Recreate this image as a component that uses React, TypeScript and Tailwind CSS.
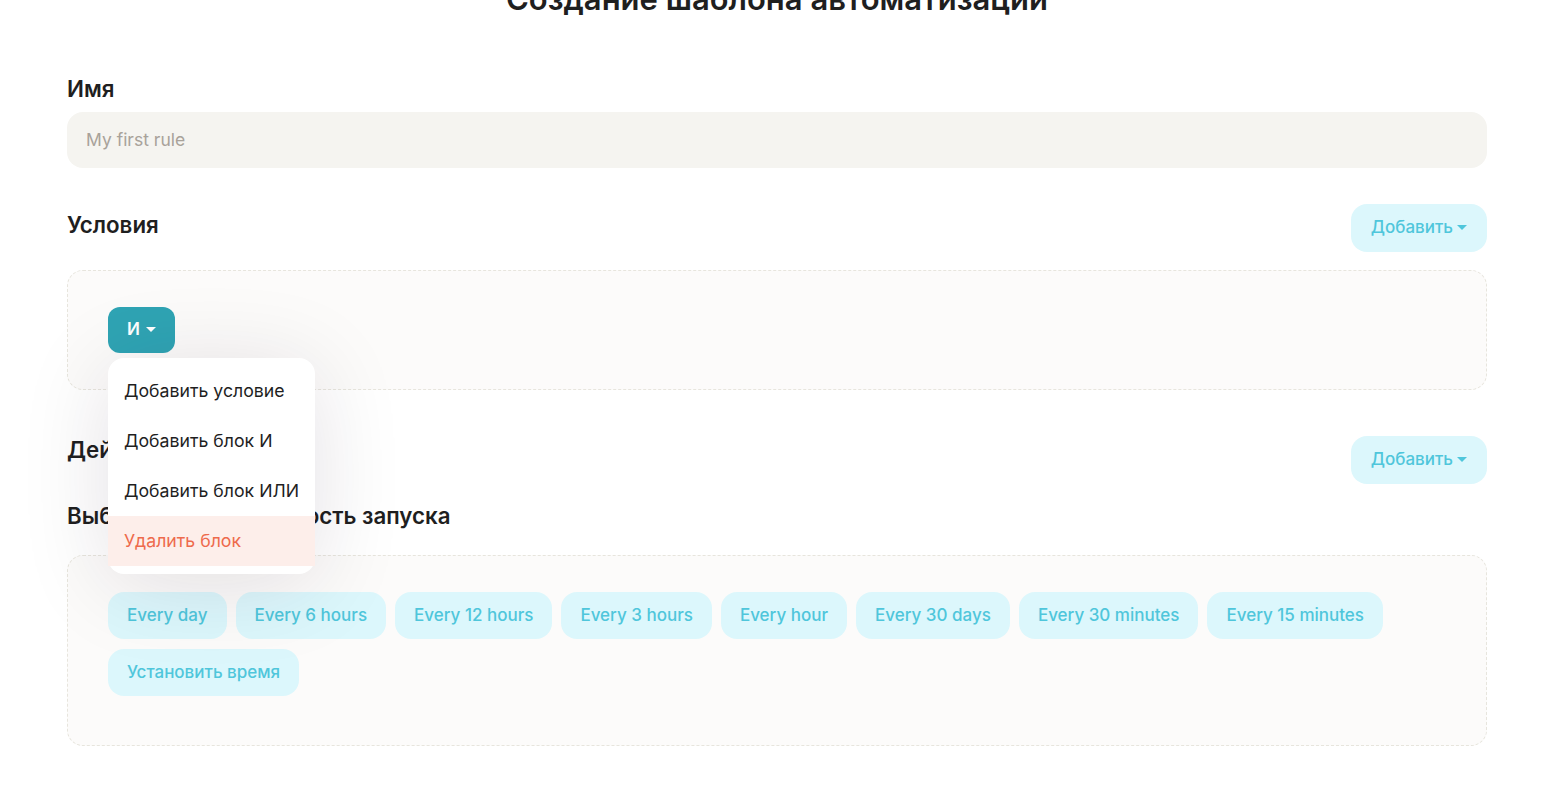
import React from "react";

const periods = [
  "Every day",
  "Every 6 hours",
  "Every 12 hours",
  "Every 3 hours",
  "Every hour",
  "Every 30 days",
  "Every 30 minutes",
  "Every 15 minutes",
  "Установить время",
];

const menuItems = ["Добавить условие", "Добавить блок И", "Добавить блок ИЛИ"];

function Caret({ className }: { className?: string }) {
  return (
    <svg width="10" height="6" viewBox="0 0 10 6" className={className}>
      <path d="M0 0h10L5 5z" fill="currentColor" />
    </svg>
  );
}

function AddButton() {
  return (
    <button className="inline-flex h-12 items-center gap-1 rounded-2xl bg-[#dcf7fc] px-5 text-[17px] font-medium text-[#4fc6db]">
      <span>Добавить</span>
      <Caret />
    </button>
  );
}

export default function App() {
  return (
    <div className="min-h-[806px] overflow-hidden bg-white font-['Inter',sans-serif] text-[#1f1f1f]">
      <div className="ml-[67px] w-[1420px]">
        <h1 className="-mt-[21px] text-center text-[31px] font-semibold leading-10 text-[#1f1f1f]">
          Создание шаблона автоматизации
        </h1>

        <div className="mt-[56px]">
          <div className="text-[22.3px] font-semibold leading-7">Имя</div>
          <div className="mt-[9px] flex h-14 items-center rounded-2xl bg-[#f5f4f0] px-[19px] text-[17.5px] text-[#a8a29a]">
            My first rule
          </div>
        </div>

        <div className="mt-9 flex items-center justify-between">
          <div className="pb-[6px] text-[22.3px] font-semibold leading-7">Условия</div>
          <AddButton />
        </div>

        <div className="relative mt-[18px] rounded-2xl border border-dashed border-[#e7e5dd] bg-[#fcfbfa] px-10 py-9">
          <button className="inline-flex h-[46px] items-center gap-1.5 rounded-xl bg-[#2fa4b4] px-[19px] text-[17px] font-semibold text-white">
            <span>И</span>
            <Caret />
          </button>

          <div className="absolute left-10 top-[87px] z-10 w-[207px] rounded-2xl bg-white py-2 shadow-[0_10px_90px_rgba(30,20,40,0.12)]">
            {menuItems.map((m) => (
              <div key={m} className="flex h-[50px] items-center whitespace-nowrap px-4 text-[17.7px]">
                {m}
              </div>
            ))}
            <div className="flex h-[50px] items-center whitespace-nowrap bg-[#fdeeea] px-4 text-[17.7px] text-[#ee6a4c]">
              Удалить блок
            </div>
          </div>
        </div>

        <div className="mt-[46px] flex items-start justify-between">
          <div className="text-[22.3px] font-semibold leading-7">Действия</div>
          <AddButton />
        </div>

        <div className="mt-[18px] text-[22.3px] font-semibold leading-7">
          Выберите периодичность запуска
        </div>

        <div className="mt-[25px] rounded-2xl border border-dashed border-[#e7e5dd] bg-[#fcfbfa] px-10 pb-[49px] pt-9">
          <div className="flex flex-wrap gap-x-[9px] gap-y-[10px]">
            {periods.map((p) => (
              <button
                key={p}
                className="flex h-[47px] items-center rounded-2xl bg-[#dcf7fc] px-[19px] text-[17px] font-medium text-[#4fc6db]"
              >
                {p}
              </button>
            ))}
          </div>
        </div>
      </div>
    </div>
  );
}
